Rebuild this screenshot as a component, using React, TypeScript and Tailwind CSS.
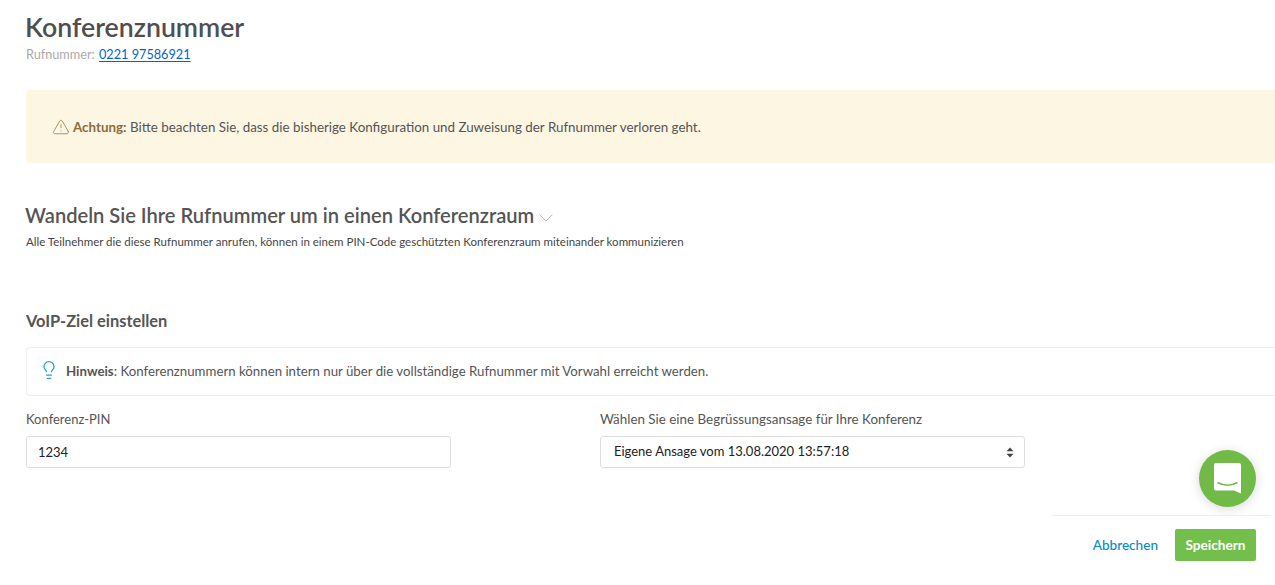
import { Lightbulb, TriangleAlert } from "lucide-react"

const font = { fontFamily: '"Lato", "Open Sans", sans-serif' }

export default function App() {
  return (
    <div className="relative h-[585px] w-full overflow-hidden bg-white pl-[26px] text-[#555]" style={font}>
      <h1 className="-ml-px pt-[12px] text-[26.7px] leading-[30px] font-semibold text-[#4f4f4f]">Konferenznummer</h1>
      <p className="mt-[3px] text-[12.7px] leading-[18px] text-[#aaa]">
        Rufnummer: <a href="#" className="ml-px text-[#0066cc] underline underline-offset-2">0221 97586921</a>
      </p>

      <div className="mt-[27px] flex h-[73px] items-center rounded-l bg-[#fdf6e3] pt-[2px] pl-[26px] text-[13.36px]">
        <TriangleAlert className="mr-[3px] mb-[2px] h-[18px] w-[18px] text-[#a08a60]" strokeWidth={1.2} />
        <span>
          <b className="font-bold text-[#8a6d3b]">Achtung:</b> Bitte beachten Sie, dass die bisherige Konfiguration und Zuweisung der Rufnummer verloren geht.
        </span>
      </div>

      <div className="mt-[40px] flex items-center">
        <h2 className="-ml-px text-[20.1px] leading-6 font-semibold text-[#555]">Wandeln Sie Ihre Rufnummer um in einen Konferenzraum</h2>
        <svg className="mt-[5px] ml-[5px]" width="14" height="8" viewBox="0 0 14 8">
          <path d="M0.5 0.5 L7 7 L13.5 0.5" fill="none" stroke="#aaa" strokeWidth="0.8" />
        </svg>
      </div>
      <p className="mt-[7px] text-[11.5px] leading-4 text-[#444]">
        Alle Teilnehmer die diese Rufnummer anrufen, können in einem PIN-Code geschützten Konferenzraum miteinander kommunizieren
      </p>

      <h3 className="mt-[61px] text-[16.4px] leading-5 font-bold text-[#555]">VoIP-Ziel einstellen</h3>

      <div className="mt-[16px] flex h-[49px] items-center rounded-l border border-r-0 border-[#eee] pl-[12px] text-[13.25px]">
        <Lightbulb className="mr-[7px] mb-[3px] h-[20px] w-[20px] text-[#1f9fd4]" strokeWidth={1.5} />
        <span>
          <b className="font-bold">Hinweis</b>: Konferenznummern können intern nur über die vollständige Rufnummer mit Vorwahl erreicht werden.
        </span>
      </div>

      <div className="mt-[14px] flex gap-[149px]">
        <div className="w-[425px]">
          <label className="block text-[13px] leading-[18px]">Konferenz-PIN</label>
          <input
            defaultValue="1234"
            className="mt-[8px] h-8 w-full rounded-[3px] border border-[#ddd] px-[11px] text-[13px] text-[#222] outline-none"
          />
        </div>
        <div className="w-[425px]">
          <label className="block text-[13.4px] leading-[18px]">Wählen Sie eine Begrüssungsansage für Ihre Konferenz</label>
          <div className="relative mt-[8px] flex h-8 items-center rounded-[3px] border border-[#ddd] px-[13px] text-[13px] text-[#222]">
            Eigene Ansage vom 13.08.2020 13:57:18
            <svg className="absolute top-[10px] right-[10px]" width="8" height="11" viewBox="0 0 8 11">
              <path d="M4 0.5 L7.5 4.3 H0.5Z M4 10.5 L7.5 6.7 H0.5Z" fill="#444" />
            </svg>
          </div>
        </div>
      </div>

      <div className="absolute top-[450px] right-[19px] flex h-[57px] w-[57px] items-center justify-center rounded-full bg-[#72ba48] shadow-[0_2px_12px_rgba(0,0,0,0.15)]">
        <svg width="27" height="31" viewBox="0 0 27 31">
          <path d="M2 0 H25 A2 2 0 0 1 27 2 V30.5 L20 27.5 H2 A2 2 0 0 1 0 25.5 V2 A2 2 0 0 1 2 0Z" fill="#fff" />
          <path d="M3.5 19.5 Q13.5 25 23.5 19.5" fill="none" stroke="#72ba48" strokeWidth="1.5" />
        </svg>
      </div>

      <div className="absolute top-[515px] right-[4px] flex h-[70px] w-[219px] items-start justify-end border-t border-[#eee] pt-[13px] pr-[15px]">
        <a href="#" className="mr-[17px] text-[13.6px] leading-8 font-medium text-[#0a8ac4]">Abbrechen</a>
        <button className="h-8 w-[81px] rounded-[2px] bg-[#72bf4b] text-[13.6px] font-bold text-white">Speichern</button>
      </div>
    </div>
  )
}
